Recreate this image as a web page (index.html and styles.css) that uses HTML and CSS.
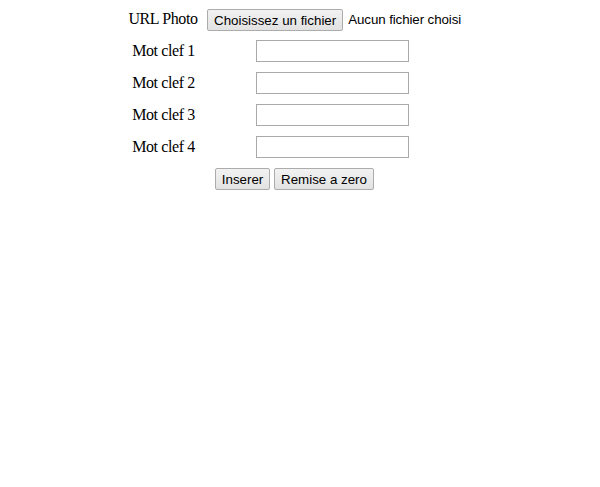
FILE: index.html
```html
<!DOCTYPE html>
<html lang="fr">
<head>
<meta charset="utf-8">
<title>Formulaire</title>
<link rel="stylesheet" href="styles.css">
</head>
<body>
<form class="form">
  <div class="label label-photo">URL Photo</div>
  <div class="field field-file">
    <span class="btn">Choisissez un fichier</span>
    <span class="file-status">Aucun fichier choisi</span>
  </div>

  <div class="label">Mot clef 1</div>
  <div class="field"><span class="text-input"></span></div>

  <div class="label">Mot clef 2</div>
  <div class="field"><span class="text-input"></span></div>

  <div class="label">Mot clef 3</div>
  <div class="field"><span class="text-input"></span></div>

  <div class="label">Mot clef 4</div>
  <div class="field"><span class="text-input"></span></div>

  <div class="actions">
    <span class="btn btn-insert">Inserer</span>
    <span class="btn btn-reset">Remise a zero</span>
  </div>
</form>
</body>
</html>
```

FILE: styles.css
```css
html, body {
  margin: 0;
  padding: 0;
  background: #ffffff;
}

body {
  font-family: "Liberation Serif", "Times New Roman", serif;
  font-size: 16px;
  color: #000000;
}

.form {
  display: grid;
  grid-template-columns: 80px 250px;
  grid-template-rows: 31px 32px 32px 32px 32px 32px;
  column-gap: 4px;
  margin: 9px 0 0 123px;
  width: 334px;
}

.label {
  display: flex;
  align-items: flex-start;
  justify-content: center;
  line-height: 18px;
  padding-top: 2px;
  padding-left: 1px;
  letter-spacing: -0.4px;
  white-space: nowrap;
}

.label-photo {
  padding-top: 1px;
  padding-left: 0;
}

.field {
  display: flex;
  justify-content: center;
  align-items: flex-start;
}

.field-file {
  justify-content: flex-start;
  gap: 5px;
  font-family: "Liberation Sans", Arial, sans-serif;
  font-size: 13.33px;
}

.file-status {
  line-height: 22px;
  letter-spacing: -0.1px;
  white-space: nowrap;
}

.text-input {
  display: block;
  width: 153px;
  height: 22px;
  box-sizing: border-box;
  border: 1px solid #a9a9a9;
  background: #ffffff;
}

.btn {
  display: inline-flex;
  align-items: center;
  justify-content: center;
  height: 22px;
  box-sizing: border-box;
  padding: 0 6px;
  border: 1px solid #acacac;
  border-radius: 2px;
  background: linear-gradient(#f2f2f2, #e2e2e2);
  font-family: "Liberation Sans", Arial, sans-serif;
  font-size: 13.33px;
  color: #000000;
  white-space: nowrap;
}

.actions {
  grid-column: 1 / 3;
  display: flex;
  gap: 4px;
  padding-left: 92px;
  align-items: flex-start;
}

.btn-insert {
  width: 55px;
}

.btn-reset {
  width: 100px;
}
```
